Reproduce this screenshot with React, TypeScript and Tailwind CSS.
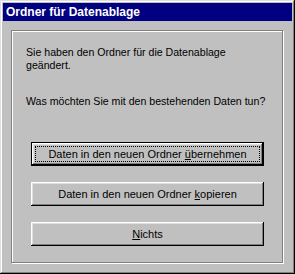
const bevel =
  "shadow-[inset_-1px_-1px_0_#000,inset_1px_1px_0_#fff,inset_-2px_-2px_0_#808080,inset_2px_2px_0_#dfdfdf]";

function Win95Button({
  children,
  isDefault,
}: {
  children: React.ReactNode;
  isDefault?: boolean;
}) {
  if (isDefault) {
    return (
      <div className="h-[24px] w-[233px] border border-black bg-[#c0c0c0]">
        <div className={`flex h-full w-full p-[3px] ${bevel}`}>
          <div className="flex flex-1 items-center justify-center border border-dotted border-black pt-[1px] text-[11px] leading-[13px] text-black">
            <span>{children}</span>
          </div>
        </div>
      </div>
    );
  }
  return (
    <div
      className={`flex h-[24px] w-[233px] items-center justify-center bg-[#c0c0c0] pt-[1px] text-[11px] leading-[13px] text-black ${bevel}`}
    >
      <span>{children}</span>
    </div>
  );
}

export default function App() {
  return (
    <div
      className="flex h-[274px] w-[295px] flex-col bg-[#c0c0c0] p-[3px] shadow-[inset_-1px_-1px_0_#000,inset_1px_1px_0_#dfdfdf,inset_-2px_-2px_0_#808080,inset_2px_2px_0_#fff]"
      style={{ fontFamily: '"Liberation Sans", Arial, sans-serif' }}
    >
      <div className="flex h-[18px] items-center bg-[#000080] px-[3px] text-[12px] font-bold text-white">
        Ordner für Datenablage
      </div>
      <div className="flex flex-1 px-[8px] pb-[7px] pt-[9px]">
        <div className="mb-[1px] mr-[1px] flex flex-1 flex-col border border-[#808080] shadow-[1px_1px_0_#fff,inset_1px_1px_0_#fff]">
          <div className="pl-[14px] pt-[15px] text-[10.6px] leading-[13px] text-black">
            <p>
              Sie haben den Ordner für die Datenablage
              <br />
              geändert.
            </p>
            <p className="mt-[23px]">Was möchten Sie mit den bestehenden Daten tun?</p>
          </div>
          <div className="mt-[34px] flex flex-col gap-[16px] pl-[19px]">
            <Win95Button isDefault>
              Daten in den neuen Ordner <span className="underline">ü</span>bernehmen
            </Win95Button>
            <Win95Button>
              Daten in den neuen Ordner <span className="underline">k</span>opieren
            </Win95Button>
            <Win95Button>
              <span className="underline">N</span>ichts
            </Win95Button>
          </div>
        </div>
      </div>
    </div>
  );
}
